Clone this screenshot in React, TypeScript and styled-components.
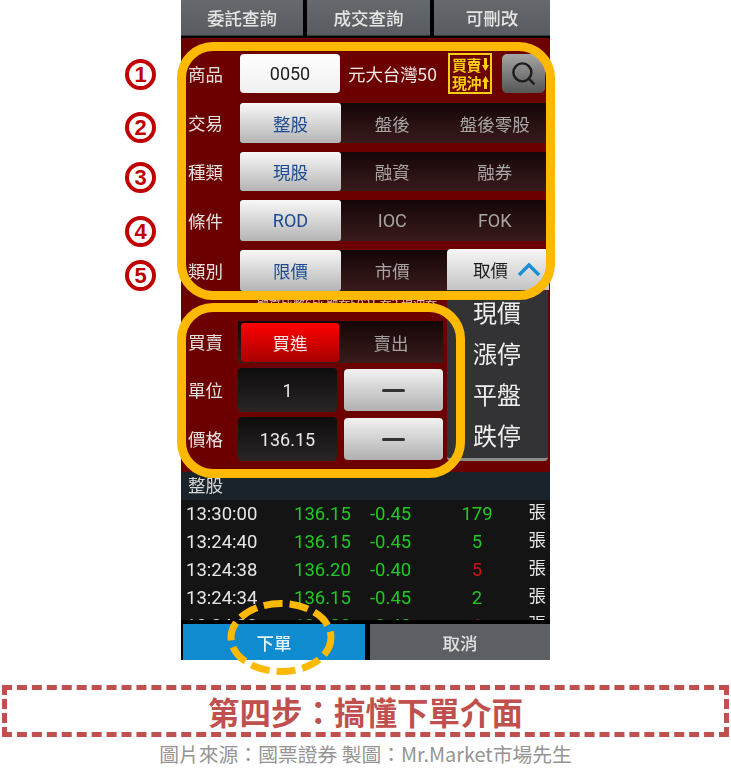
import styled, { createGlobalStyle } from "styled-components";
import { Search } from "lucide-react";

const CJK = `"Noto Sans CJK TC", "Noto Sans", sans-serif`;
const LATIN = `Roboto, "Noto Sans CJK TC", sans-serif`;

const TITLE = "第四步\uFF1A搞懂下單介面";
const CREDIT = "圖片來源\uFF1A國票證券 製圖\uFF1AMr.Market市場先生";

const GlobalStyle = createGlobalStyle`
    html, body {
        margin: 0;
        padding: 0;
        background: #fff;
        font-family: ${CJK};
    }
`;

const Stage = styled.div`
    position: relative;
    width: 731px;
    height: 779px;
    overflow: hidden;
    display: flex;
    flex-direction: column;
    align-items: center;
`;

const Phone = styled.div`
    position: relative;
    width: 369px;
    height: 660px;
    flex: none;
    background: #000;
    display: flex;
    flex-direction: column;
    filter: blur(0.35px);
`;

const Tabs = styled.div`
    display: grid;
    grid-template-columns: 122px 123px 1fr;
    gap: 4px;
    height: 36px;
    flex: none;
`;

const Tab = styled.div`
    display: flex;
    align-items: center;
    justify-content: center;
    background: linear-gradient(#666a6e, #585c60);
    border-bottom: 1px solid #33363a;
    color: #e4e4e4;
    font-size: 17.5px;
    font-weight: 500;
`;

const Panel = styled.div`
    margin-top: 2px;
    height: 434px;
    flex: none;
    box-sizing: border-box;
    background: #6c0000;
    padding: 15px 4px 0 7px;
    display: flex;
    flex-direction: column;
    gap: 9px;
`;

const Row = styled.div<{ $h: number }>`
    display: flex;
    align-items: center;
    height: ${(p) => p.$h}px;
    flex: none;
`;

const OrderRows = styled.div`
    display: flex;
    flex-direction: column;
    gap: 5px;
`;

const Label = styled.div`
    width: 52px;
    flex: none;
    color: #e6e0e0;
    font-size: 17.5px;
    line-height: 1;
`;

const ProductInput = styled.div`
    width: 100px;
    height: 39px;
    flex: none;
    display: flex;
    align-items: center;
    justify-content: center;
    border-radius: 4px;
    background: linear-gradient(#fff, #efefef);
    color: #1c1c1c;
    font-family: ${LATIN};
    font-size: 18px;
`;

const ProductName = styled.div`
    margin-left: 8px;
    width: 100px;
    flex: none;
    color: #f2eaea;
    font-size: 17.5px;
    letter-spacing: -0.1px;
    white-space: nowrap;
`;

const Badge = styled.div`
    width: 44px;
    height: 41px;
    flex: none;
    box-sizing: border-box;
    border: 2px solid #f5cf10;
    display: grid;
    grid-template-columns: 1fr 7px;
    align-items: center;
    justify-items: center;
    padding: 1px;
    color: #f5cf10;
    font-size: 15px;
    font-weight: 700;
    line-height: 17px;
    letter-spacing: -0.5px;
    white-space: nowrap;
`;

const SearchButton = styled.div`
    margin-left: 10px;
    width: 43px;
    height: 39px;
    flex: none;
    display: flex;
    align-items: center;
    justify-content: center;
    border-radius: 5px;
    background: linear-gradient(#a5a5a5, #555);
    color: #1e1e1e;
`;

const Segments = styled.div`
    width: 306px;
    height: 100%;
    flex: none;
    display: grid;
    grid-template-columns: 101px 1fr 1fr;
    background: linear-gradient(#150607, #3a1b1c);
`;

const Segment = styled.div<{ $active?: boolean }>`
    display: flex;
    align-items: center;
    justify-content: center;
    border-radius: 3px;
    font-size: 17.5px;
    background: ${(p) => (p.$active ? "linear-gradient(#f8f8f8, #b4b4b4)" : "transparent")};
    color: ${(p) => (p.$active ? "#1d4a90" : "#a9a5a5")};
`;

const LatinText = styled.span`
    font-family: ${LATIN};
    font-size: 18px;
`;

const Note = styled.div`
    height: 16px;
    flex: none;
    margin: -4px 0 0 69px;
    width: 190px;
    overflow: hidden;
    color: #d8c8c8;
    font-size: 12px;
    line-height: 14px;
    white-space: nowrap;
`;

const TradeGrid = styled.div`
    display: grid;
    grid-template-columns: 99px 99px;
    gap: 7px;
    width: 205px;
    flex: none;
    height: 100%;
    margin-left: -2px;
`;

const BuySell = styled.div`
    width: 205px;
    height: 100%;
    flex: none;
    box-sizing: border-box;
    padding: 2px 0 1px 3px;
    margin-left: -2px;
    display: grid;
    grid-template-columns: 98px 1fr;
    background: linear-gradient(#150607, #3a1b1c);
`;

const BuyCell = styled.div<{ $active?: boolean }>`
    display: flex;
    align-items: center;
    justify-content: center;
    border-radius: 3px;
    font-size: 17.5px;
    background: ${(p) => (p.$active ? "linear-gradient(#ff0000, #a80000)" : "transparent")};
    color: ${(p) => (p.$active ? "#f6e6e6" : "#a5a0a0")};
`;

const ValueBox = styled.div`
    display: flex;
    align-items: center;
    justify-content: center;
    border-radius: 4px;
    background: linear-gradient(#0d0d0d, #2b2527);
    color: #e8e8e8;
    font-family: ${LATIN};
    font-size: 18px;
`;

const StepButton = styled.div`
    margin: 1px 0;
    display: flex;
    align-items: center;
    justify-content: center;
    border-radius: 4px;
    background: linear-gradient(#f2f2f2, #b0b0b0);
`;

const MinusBar = styled.span`
    width: 23px;
    height: 3px;
    border-radius: 2px;
    background: #333;
`;

const SubHeader = styled.div`
    height: 28px;
    flex: none;
    box-sizing: border-box;
    padding-left: 7px;
    background: #1a2329;
    color: #d8d8d8;
    font-size: 17.5px;
    line-height: 26px;
`;

const TickList = styled.div`
    height: 120px;
    flex: none;
    overflow: hidden;
    background: #141414;
`;

const TickRow = styled.div`
    display: grid;
    grid-template-columns: 108px 76px 72px 70px 1fr;
    height: 28px;
    align-items: center;
    padding: 0 4px 0 5px;
    font-family: ${LATIN};
    font-size: 18.5px;
    color: #22c822;
`;

const TickTime = styled.span`
    color: #e6e6e6;
`;

const TickVolume = styled.span<{ $up?: boolean }>`
    text-align: center;
    color: ${(p) => (p.$up ? "#d01010" : "#22c822")};
`;

const TickUnit = styled.span`
    justify-self: end;
    color: #e6e6e6;
    font-size: 17.5px;
    line-height: 1;
    margin-top: -2px;
`;

const ActionBar = styled.div`
    margin-top: 4px;
    height: 36px;
    flex: none;
    display: grid;
    grid-template-columns: 182px 1fr;
    gap: 5px;
    padding-left: 2px;
`;

const ActionButton = styled.div<{ $primary?: boolean }>`
    display: flex;
    align-items: center;
    justify-content: center;
    background: ${(p) => (p.$primary ? "#0f8bd0" : "#5c6064")};
    color: ${(p) => (p.$primary ? "#e4f2fa" : "#e0e0e0")};
    font-size: 17.5px;
    font-weight: 500;
`;

/* dropdown lying over the form */
const PriceDropdown = styled.div`
    position: absolute;
    left: 266px;
    top: 249px;
    width: 102px;
`;

const DropdownHead = styled.div`
    height: 41px;
    display: flex;
    align-items: center;
    gap: 9px;
    padding-left: 26px;
    box-sizing: border-box;
    border-radius: 4px 4px 0 0;
    background: linear-gradient(#f6f6f6, #c4c4c4);
    color: #1c1c1c;
    font-size: 17.5px;
`;

const DropdownMenu = styled.div`
    height: 171px;
    box-sizing: border-box;
    padding-top: 1px;
    width: 101px;
    background: #333335;
    border-bottom: 3px solid #8d8d8d;
    border-radius: 0 0 4px 4px;
`;

const DropdownItem = styled.div`
    height: 41px;
    padding-left: 26px;
    color: #eee;
    font-size: 24px;
    line-height: 41px;
`;

/* annotations drawn on top of the screenshot */
const Ring = styled.div<{ $l: number; $t: number; $w: number; $h: number }>`
    position: absolute;
    left: ${(p) => p.$l}px;
    top: ${(p) => p.$t}px;
    width: ${(p) => p.$w}px;
    height: ${(p) => p.$h}px;
    box-sizing: border-box;
    border: 9px solid #ffb900;
    border-radius: 36px;
`;

const DashedEllipse = styled.svg`
    position: absolute;
    left: 226px;
    top: 598px;
`;

const StepNumber = styled.div<{ $t: number }>`
    position: absolute;
    left: 125px;
    top: ${(p) => p.$t}px;
    width: 31px;
    height: 31px;
    box-sizing: border-box;
    border: 4px solid #c00000;
    border-radius: 50%;
    display: flex;
    align-items: center;
    justify-content: center;
    color: #c00000;
    font-family: "Liberation Sans", sans-serif;
    font-size: 22px;
    font-weight: 700;
`;

const Banner = styled.div`
    margin-top: 25px;
    width: 727px;
    height: 52px;
    flex: none;
    box-sizing: border-box;
    border: 5px dashed #c0504d;
    display: flex;
    align-items: center;
    justify-content: center;
    color: #c0504d;
    font-size: 31.5px;
    font-weight: 700;
    white-space: nowrap;
`;

const Credit = styled.div`
    margin-top: 4px;
    color: #949494;
    font-size: 19.8px;
    line-height: 26px;
    white-space: nowrap;
`;

const ticks = [
    { time: "13:30:00", price: "136.15", change: "-0.45", volume: "179" },
    { time: "13:24:40", price: "136.15", change: "-0.45", volume: "5" },
    { time: "13:24:38", price: "136.20", change: "-0.40", volume: "5", up: true },
    { time: "13:24:34", price: "136.15", change: "-0.45", volume: "2" },
    { time: "13:24:33", price: "136.20", change: "-0.40", volume: "1", up: true },
];

function Arrow({ down }: { down?: boolean }) {
    return (
        <svg width="7" height="13" viewBox="0 0 7 13">
            <path
                d={down ? "M2 0h3v7h2l-3.5 6L0 7h2z" : "M2 13h3V6h2L3.5 0 0 6h2z"}
                fill="#f5cf10"
            />
        </svg>
    );
}

export default function App() {
    return (
        <Stage>
            <GlobalStyle />
            <Phone>
                <Tabs>
                    <Tab>委託查詢</Tab>
                    <Tab>成交查詢</Tab>
                    <Tab>可刪改</Tab>
                </Tabs>
                <Panel>
                    <Row $h={41}>
                        <Label>商品</Label>
                        <ProductInput>0050</ProductInput>
                        <ProductName>元大台灣50</ProductName>
                        <Badge>
                            <span>買賣</span>
                            <Arrow down />
                            <span>現沖</span>
                            <Arrow />
                        </Badge>
                        <SearchButton>
                            <Search size={27} strokeWidth={2.2} />
                        </SearchButton>
                    </Row>
                    <Row $h={40}>
                        <Label>交易</Label>
                        <Segments>
                            <Segment $active>整股</Segment>
                            <Segment>盤後</Segment>
                            <Segment>盤後零股</Segment>
                        </Segments>
                    </Row>
                    <Row $h={39}>
                        <Label>種類</Label>
                        <Segments>
                            <Segment $active>現股</Segment>
                            <Segment>融資</Segment>
                            <Segment>融券</Segment>
                        </Segments>
                    </Row>
                    <Row $h={41}>
                        <Label>條件</Label>
                        <Segments>
                            <Segment $active><LatinText>ROD</LatinText></Segment>
                            <Segment><LatinText>IOC</LatinText></Segment>
                            <Segment><LatinText>FOK</LatinText></Segment>
                        </Segments>
                    </Row>
                    <Row $h={41}>
                        <Label>類別</Label>
                        <Segments>
                            <Segment $active>限價</Segment>
                            <Segment>市價</Segment>
                            <Segment />
                        </Segments>
                    </Row>
                    <Note>融資成數6成 融券5021 券2 現沖券</Note>
                    <OrderRows>
                        <Row $h={42}>
                            <Label>買賣</Label>
                            <BuySell>
                                <BuyCell $active>買進</BuyCell>
                                <BuyCell>賣出</BuyCell>
                            </BuySell>
                        </Row>
                        <Row $h={44}>
                            <Label>單位</Label>
                            <TradeGrid>
                                <ValueBox>1</ValueBox>
                                <StepButton><MinusBar /></StepButton>
                            </TradeGrid>
                        </Row>
                        <Row $h={44}>
                            <Label>價格</Label>
                            <TradeGrid>
                                <ValueBox>136.15</ValueBox>
                                <StepButton><MinusBar /></StepButton>
                            </TradeGrid>
                        </Row>
                    </OrderRows>
                </Panel>
                <SubHeader>整股</SubHeader>
                <TickList>
                    {ticks.map((t) => (
                        <TickRow key={t.time}>
                            <TickTime>{t.time}</TickTime>
                            <span>{t.price}</span>
                            <span>{t.change}</span>
                            <TickVolume $up={t.up}>{t.volume}</TickVolume>
                            <TickUnit>張</TickUnit>
                        </TickRow>
                    ))}
                </TickList>
                <ActionBar>
                    <ActionButton $primary>下單</ActionButton>
                    <ActionButton>取消</ActionButton>
                </ActionBar>
                <PriceDropdown>
                    <DropdownHead>
                        取價
                        <svg width="24" height="15" viewBox="0 0 24 15">
                            <path d="M2 13 12 3l10 10" fill="none" stroke="#1a8fd6" strokeWidth="3.4" />
                        </svg>
                    </DropdownHead>
                    <DropdownMenu>
                        <DropdownItem>現價</DropdownItem>
                        <DropdownItem>漲停</DropdownItem>
                        <DropdownItem>平盤</DropdownItem>
                        <DropdownItem>跌停</DropdownItem>
                    </DropdownMenu>
                </PriceDropdown>
            </Phone>
            <Banner>{TITLE}</Banner>
            <Credit>{CREDIT}</Credit>

            <Ring $l={177} $t={42} $w={378} $h={258} />
            <Ring $l={177} $t={303} $w={288} $h={175} />
            <DashedEllipse width="112" height="80" viewBox="0 0 112 80">
                <ellipse
                    cx="55"
                    cy="39.5"
                    rx="50"
                    ry="34"
                    fill="none"
                    stroke="#ffb900"
                    strokeWidth="7"
                    strokeDasharray="19 7"
                />
            </DashedEllipse>
            <StepNumber $t={59}>1</StepNumber>
            <StepNumber $t={112}>2</StepNumber>
            <StepNumber $t={162}>3</StepNumber>
            <StepNumber $t={216}>4</StepNumber>
            <StepNumber $t={260}>5</StepNumber>
        </Stage>
    );
}
